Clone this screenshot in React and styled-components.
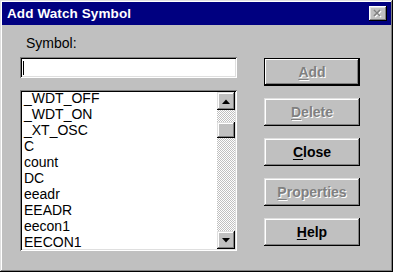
import styled, { createGlobalStyle } from 'styled-components';

const GlobalStyle = createGlobalStyle`
	html, body {
		margin: 0;
		padding: 0;
		background: #c0c0c0;
	}
	body {
		font-family: "Liberation Sans", Arial, sans-serif;
	}
`;

const Window = styled.div`
	box-sizing: border-box;
	width: 393px;
	height: 272px;
	padding: 2px;
	background: #c0c0c0;
	box-shadow: inset -1px -1px #000, inset 1px 1px #dfdfdf, inset -2px -2px #808080, inset 2px 2px #fff;
	display: flex;
	flex-direction: column;
`;

const TitleBar = styled.div`
	height: 23px;
	background: #000080;
	display: flex;
	align-items: center;
	justify-content: space-between;
	padding: 0 4px 0 5px;
`;

const Title = styled.span`
	color: #fff;
	font-weight: bold;
	font-size: 13.5px;
	letter-spacing: 0.1px;
`;

const CloseBox = styled.div`
	width: 18px;
	height: 15px;
	background: #c0c0c0;
	box-shadow: inset -1px -1px #000, inset 1px 1px #fff, inset -2px -2px #808080, inset 2px 2px #dfdfdf;
	display: flex;
	align-items: center;
	justify-content: center;
`;

const Body = styled.div`
	display: flex;
	padding: 10px 0 0 18px;
	gap: 27px;
`;

const LeftColumn = styled.div`
	width: 217px;
	display: flex;
	flex-direction: column;
`;

const Label = styled.div`
	font-size: 14px;
	line-height: 16px;
	height: 16px;
	padding-left: 6px;
	color: #000;
	margin-bottom: 6px;
`;

const sunken = `
	box-sizing: border-box;
	background: #fff;
	box-shadow: inset 1px 1px #808080, inset -1px -1px #fff, inset 2px 2px #000, inset -2px -2px #dfdfdf;
`;

const Field = styled.div`
	${sunken}
	height: 21px;
	padding: 4px 0 0 3px;
	margin-bottom: 12px;
`;

const Caret = styled.div`
	width: 1px;
	height: 14px;
	background: #000;
`;

const ListBox = styled.div`
	${sunken}
	height: 161px;
	padding: 2px;
	display: flex;
`;

const Items = styled.div`
	flex: 1;
	margin-top: -2px;
`;

const Item = styled.div`
	height: 16px;
	line-height: 16px;
	font-size: 14px;
	padding-left: 2px;
	color: #000;
	white-space: nowrap;
`;

const ScrollBar = styled.div`
	width: 18px;
	display: flex;
	flex-direction: column;
`;

const raised = `
	box-sizing: border-box;
	background: #c0c0c0;
	box-shadow: inset -1px -1px #000, inset 1px 1px #dfdfdf, inset -2px -2px #808080, inset 2px 2px #fff;
`;

const ArrowButton = styled.div`
	${raised}
	height: 18px;
	display: flex;
	align-items: center;
	justify-content: center;
`;

const Track = styled.div`
	flex: 1;
	padding-top: 12px;
	background: repeating-conic-gradient(#c0c0c0 0 25%, #fff 0 50%) 0 0 / 2px 2px;
`;

const Thumb = styled.div`
	${raised}
	height: 16px;
`;

const ButtonColumn = styled.div`
	width: 96px;
	padding-top: 23px;
	display: flex;
	flex-direction: column;
	gap: 12px;
`;

const Button = styled.div`
	${raised}
	height: 28px;
	display: flex;
	align-items: center;
	justify-content: center;
	font-size: 14px;
	font-weight: bold;
	color: ${(p) => (p.$disabled ? '#808080' : '#000')};
	text-shadow: ${(p) => (p.$disabled ? '1px 1px 0 #fff' : 'none')};
	${(p) =>
		p.$default &&
		`box-shadow: inset 1px 1px #000, inset -1px -1px #000, inset -2px -2px #000, inset 2px 2px #fff, inset -3px -3px #808080;`}

	u {
		text-decoration: underline;
		text-underline-offset: 2px;
	}
`;

const Arrow = ({ down }) => (
	<svg width="8" height="5" viewBox="0 0 8 5">
		<path d={down ? 'M0 0H8L4 4.5Z' : 'M0 5H8L4 0.5Z'} fill="#000" />
	</svg>
);

const items = ['_WDT_OFF', '_WDT_ON', '_XT_OSC', 'C', 'count', 'DC', 'eeadr', 'EEADR', 'eecon1', 'EECON1'];

const buttons = [
	{ key: 'A', rest: 'dd', disabled: true, def: true },
	{ key: 'D', rest: 'elete', disabled: true },
	{ key: 'C', rest: 'lose' },
	{ key: 'P', rest: 'roperties', disabled: true },
	{ key: 'H', rest: 'elp' },
];

export default function App() {
	return (
		<>
			<GlobalStyle />
			<Window>
				<TitleBar>
					<Title>Add Watch Symbol</Title>
					<CloseBox>
						<svg width="10" height="9" viewBox="0 0 10 9">
							<path d="M2 2L8 8M8 2L2 8" stroke="#fff" strokeWidth="1.6" />
							<path d="M1 1L7 7M7 1L1 7" stroke="#808080" strokeWidth="1.6" />
						</svg>
					</CloseBox>
				</TitleBar>
				<Body>
					<LeftColumn>
						<Label>Symbol:</Label>
						<Field>
							<Caret />
						</Field>
						<ListBox>
							<Items>
								{items.map((it) => (
									<Item key={it}>{it}</Item>
								))}
							</Items>
							<ScrollBar>
								<ArrowButton>
									<Arrow />
								</ArrowButton>
								<Track>
									<Thumb />
								</Track>
								<ArrowButton>
									<Arrow down />
								</ArrowButton>
							</ScrollBar>
						</ListBox>
					</LeftColumn>
					<ButtonColumn>
						{buttons.map((b) => (
							<Button key={b.key} $disabled={b.disabled} $default={b.def}>
								<span>
									<u>{b.key}</u>
									{b.rest}
								</span>
							</Button>
						))}
					</ButtonColumn>
				</Body>
			</Window>
		</>
	);
}
